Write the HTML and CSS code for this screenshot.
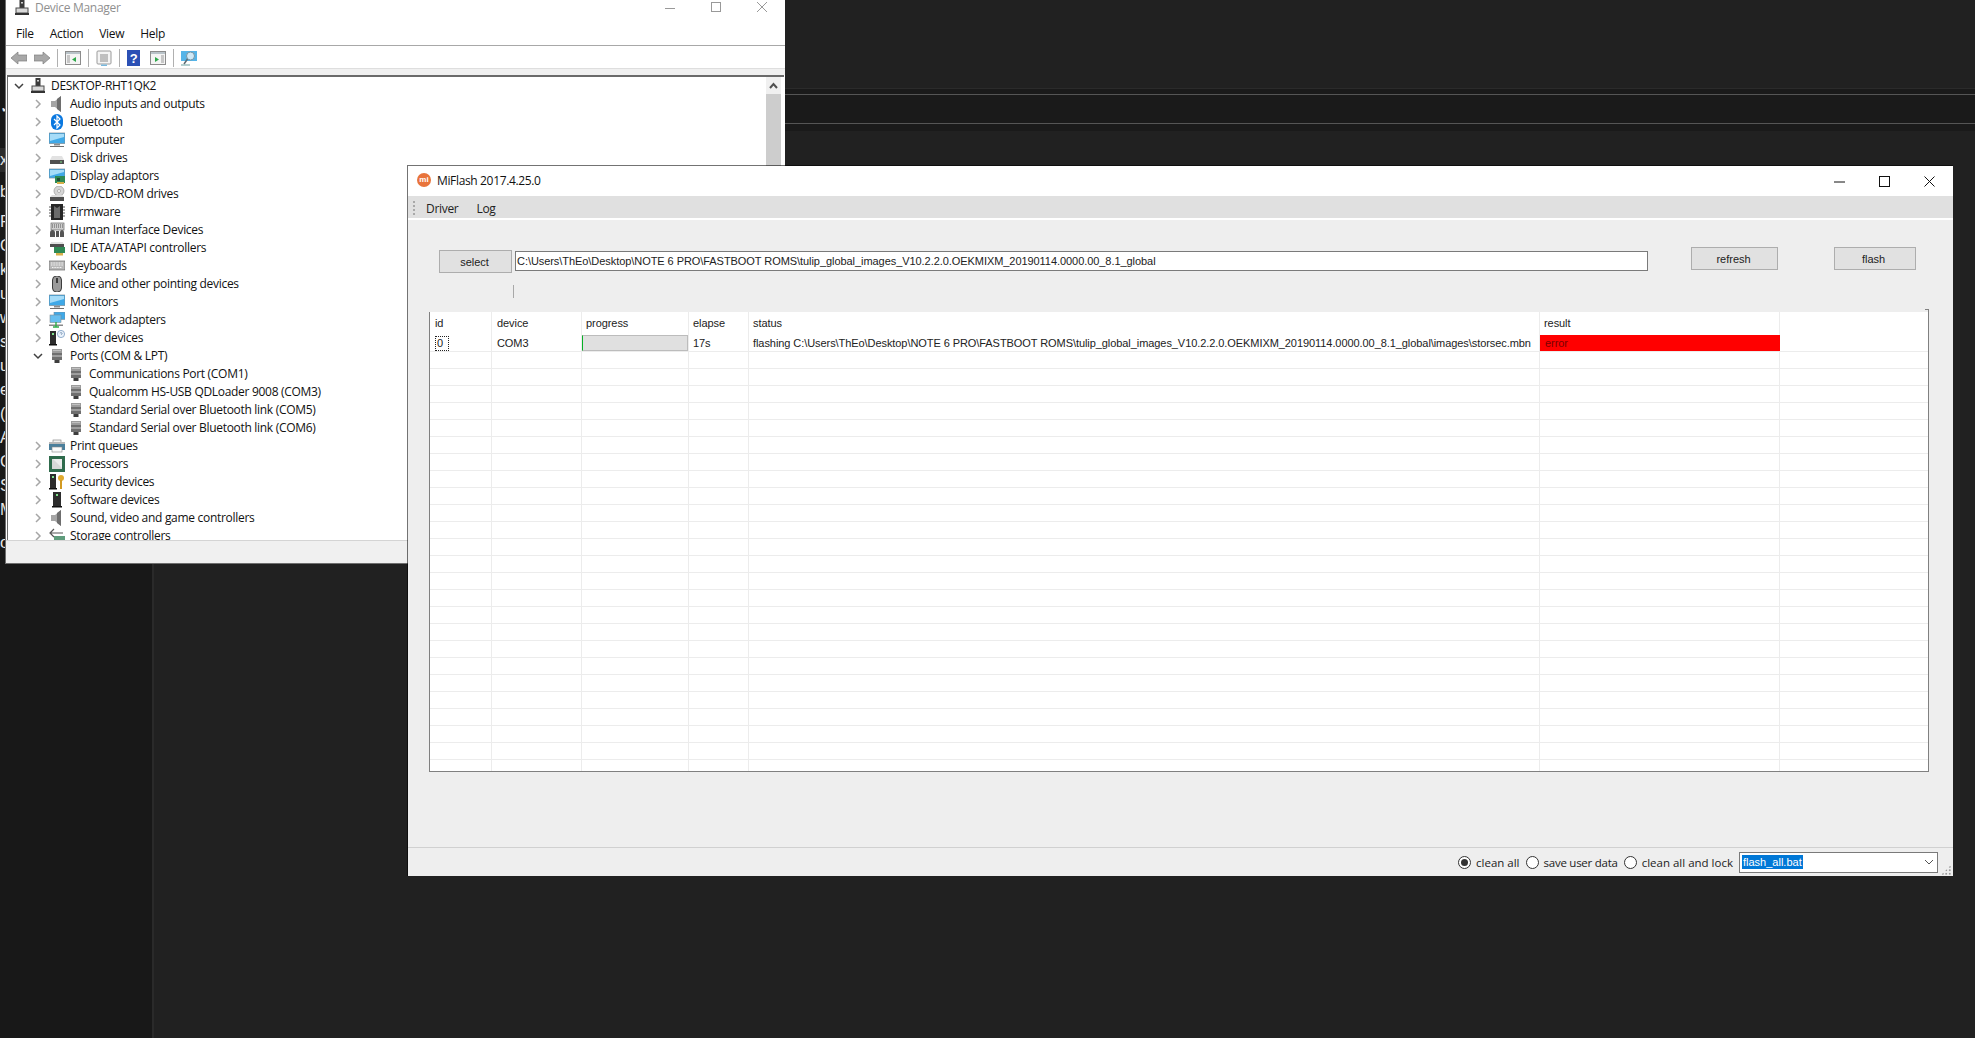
FILE: index.html
```html
<!DOCTYPE html>
<html lang="en">
<head>
<meta charset="utf-8">
<title>Device Manager and MiFlash</title>
<link rel="stylesheet" href="styles.css">
</head>
<body>
<svg class="defs" width="0" height="0" aria-hidden="true">
  <symbol id="i-pc" viewBox="0 0 16 16"><rect x="5.5" y="0" width="5" height="9" fill="#3a3a3a"/><rect x="7" y="2" width="2" height="1.5" fill="#cfcfcf"/><rect x="2" y="8" width="12" height="5" fill="#d9d9d9" stroke="#4a4a4a"/><rect x="1" y="13" width="14" height="2" fill="#333"/></symbol>
  <symbol id="i-audio" viewBox="0 0 16 16"><path d="M2 5h4l6-5v16l-6-5H2z" fill="#a5a5a5"/><path d="M8 3l4-3v16l-4-3z" fill="#6e6e6e"/></symbol>
  <symbol id="i-bt" viewBox="0 0 16 16"><rect x="2" y="0" width="12" height="16" rx="6" fill="#0a78e0"/><path d="M5 5l6 6-3 3V2l3 3-6 6" fill="none" stroke="#fff" stroke-width="1.2"/></symbol>
  <symbol id="i-monitor" viewBox="0 0 16 16"><rect x="0" y="1" width="16" height="10.5" fill="#3fa9e8" stroke="#7d8c96" stroke-width=".7"/><path d="M1 2h14v3L1 9z" fill="#a6dcf8"/><rect x="5" y="12" width="6" height="1.5" fill="#8d8d8d"/><rect x="1" y="14" width="14" height="1" fill="#6d6d6d"/></symbol>
  <symbol id="i-disk" viewBox="0 0 16 16"><path d="M3 6h10l2 4H1z" fill="#e2e2e2"/><rect x="1" y="10" width="14" height="4" fill="#4f4f4f"/><rect x="11" y="11.5" width="2" height="1" fill="#7fe08a"/></symbol>
  <symbol id="i-display" viewBox="0 0 16 16"><rect x="0" y="1" width="16" height="9" fill="#3fa9e8" stroke="#7d8c96" stroke-width=".7"/><path d="M1 2h14v2L1 8z" fill="#a6dcf8"/><rect x="6" y="8" width="10" height="7" fill="#2f8a55"/><rect x="8" y="14" width="7" height="2" fill="#d8b04a"/><rect x="8" y="10" width="3" height="3" fill="#1f4a33"/></symbol>
  <symbol id="i-dvd" viewBox="0 0 16 16"><circle cx="10" cy="5" r="5" fill="#d5d5d5" stroke="#9a9a9a" stroke-width=".7"/><circle cx="10" cy="5" r="1.5" fill="#fff" stroke="#8a8a8a" stroke-width=".6"/><path d="M3 9h10l2 2H1z" fill="#dcdcdc"/><rect x="1" y="11" width="14" height="4" fill="#4f4f4f"/></symbol>
  <symbol id="i-chip" viewBox="0 0 16 16"><rect x="2" y="0" width="12" height="16" fill="#262626"/><path d="M5 2l3 2 3-2v12H5z" fill="#6a6a6a"/><path d="M2 3H0M2 6H0M2 9H0M2 12H0M16 3h-2M16 6h-2M16 9h-2M16 12h-2" stroke="#555"/></symbol>
  <symbol id="i-hid" viewBox="0 0 16 16"><rect x="2" y="1" width="13" height="7" fill="#cfcfcf" stroke="#6a6a6a" stroke-width=".7"/><path d="M3 3h11M3 5h11" stroke="#555" stroke-dasharray="1 1"/><path d="M1 15V11q0-3 2.5-3T6 11v4zM7 15V9h3v6zM11 15v-4q0-3 2-3t2 3v4z" fill="#555"/></symbol>
  <symbol id="i-ide" viewBox="0 0 16 16"><path d="M2 2h12l1 3H1z" fill="#e2e2e2"/><rect x="1" y="4" width="14" height="3" fill="#4f4f4f"/><rect x="5" y="7" width="11" height="6" fill="#2f8a55"/><rect x="7" y="13" width="7" height="2.5" fill="#d8b04a"/></symbol>
  <symbol id="i-kbd" viewBox="0 0 16 16"><rect x="0" y="3" width="16" height="9" fill="#b8b8b8" stroke="#6a6a6a" stroke-width=".7"/><path d="M2 5h12M2 7h12M3 9.500h10" stroke="#f4f4f4" stroke-dasharray="1 .6"/></symbol>
  <symbol id="i-mouse" viewBox="0 0 16 16"><rect x="3.500" y="0" width="9" height="16" rx="4" fill="#9a9a9a" stroke="#3c3c3c"/><rect x="7" y="2" width="2" height="5" fill="#3c3c3c"/></symbol>
  <symbol id="i-net" viewBox="0 0 16 16"><rect x="5" y="0" width="11" height="7.500" fill="#3fa9e8" stroke="#7d8c96" stroke-width=".6"/><rect x="1" y="3" width="11" height="7.500" fill="#67bff0" stroke="#7d8c96" stroke-width=".6"/><rect x="0" y="12.500" width="14" height="1.500" fill="#8a8a8a"/><path d="M7 10v5M4 15h6" stroke="#2eae4a" stroke-width="1.400"/></symbol>
  <symbol id="i-other" viewBox="0 0 16 16"><rect x="1" y="1" width="6" height="13" fill="#2c2c2c"/><rect x="3" y="3" width="2" height="2" fill="#7ee08a"/><rect x="0" y="14" width="8" height="1.500" fill="#111"/><circle cx="12" cy="4" r="3.600" fill="#eaf2fb" stroke="#7b9cc0" stroke-width=".8"/><path d="M10.800 3.200q1.200-1.400 2.400 0 0 .8-1.200 1.600" fill="none" stroke="#5f7fa3" stroke-width=".7"/></symbol>
  <symbol id="i-port" viewBox="0 0 16 16"><rect x="3" y="1" width="10" height="5" fill="#9c9c9c"/><path d="M4.500 2.500h7" stroke="#e5e5e5" stroke-dasharray="1 1"/><rect x="3" y="5" width="10" height="7" fill="#6f6f6f"/><path d="M3 8h10" stroke="#cfcfcf"/><rect x="5.500" y="12" width="5" height="3" fill="#3d3d3d"/></symbol>
  <symbol id="i-print" viewBox="0 0 16 16"><rect x="4" y="2" width="8" height="4" fill="#f2f2f2" stroke="#777" stroke-width=".6"/><path d="M0 5h16v7h-3V9H3v3H0z" fill="#4a7f9c"/><rect x="0" y="4" width="16" height="2" fill="#b9b9b9"/><rect x="3" y="9" width="10" height="5" fill="#fbfbfb" stroke="#888" stroke-width=".6"/></symbol>
  <symbol id="i-cpu" viewBox="0 0 16 16"><rect x="0" y="0" width="16" height="16" fill="#2f6b4c"/><rect x="3" y="3" width="10" height="10" fill="#d8d8d8"/><path d="M4 3l9 0 0 9z" fill="#ececec"/></symbol>
  <symbol id="i-sec" viewBox="0 0 16 16"><rect x="1" y="0" width="6" height="14" fill="#2c2c2c"/><rect x="3" y="2" width="2" height="2" fill="#7ee08a"/><rect x="0" y="14" width="8" height="1.500" fill="#111"/><circle cx="12" cy="4" r="3" fill="#e0aa2e"/><rect x="11" y="6" width="2" height="9" fill="#d29a22"/></symbol>
  <symbol id="i-soft" viewBox="0 0 16 16"><rect x="4" y="0" width="8" height="14" fill="#2c2c2c"/><rect x="7" y="2" width="2" height="2" fill="#7ee08a"/><rect x="3" y="14" width="10" height="1.500" fill="#111"/></symbol>
  <symbol id="i-store" viewBox="0 0 16 16"><path d="M5 1L1 5l4 4M2 5h12" fill="none" stroke="#555" stroke-width="1.200"/><rect x="5" y="8" width="11" height="5" fill="#5f9c7c"/></symbol>
  <symbol id="c-r" viewBox="0 0 10 10"><path d="M3 1l4 4-4 4" fill="none" stroke="#a6a6a6" stroke-width="1.500"/></symbol>
  <symbol id="c-d" viewBox="0 0 10 10"><path d="M1 3l4 4 4-4" fill="none" stroke="#404040" stroke-width="1.500"/></symbol>
</svg>

<div class="desktop">
  <aside class="side">
    <div class="strip">
      <span class="ln">✓</span>
      <span class="ln hl m28">x</span>
      <span class="ln m8">b</span>
      <span class="ln m6">P(</span>
      <span class="ln">O</span>
      <span class="ln">k</span>
      <span class="ln">u</span>
      <span class="ln">w</span>
      <span class="ln">si</span>
      <span class="ln">u</span>
      <span class="ln">e</span>
      <span class="ln">(C</span>
      <span class="ln">A</span>
      <span class="ln">C</span>
      <span class="ln">S</span>
      <span class="ln">M</span>
      <span class="ln m9">o</span>
    </div>
  </aside>
  <main class="editor">
    <div class="band"><div class="band-in"></div></div>
  </main>

  <section class="win dm">
    <header class="dm-title">
      <svg class="ic ttl-ic"><use href="#i-pc"/></svg>
      <span class="dm-name">Device Manager</span>
      <span class="dm-ctl">
        <svg width="10" height="10" viewBox="0 0 10 10"><path d="M0 6.500h10" stroke="#999"/></svg>
        <svg width="10" height="10" viewBox="0 0 10 10"><rect x=".5" y=".5" width="9" height="9" fill="none" stroke="#999"/></svg>
        <svg width="10" height="10" viewBox="0 0 10 10"><path d="M0 0l10 10M10 0L0 10" stroke="#999"/></svg>
      </span>
    </header>
    <nav class="dm-menu"><span>File</span><span>Action</span><span>View</span><span>Help</span></nav>
    <div class="dm-tools">
      <svg class="t t-first" viewBox="0 0 16 16"><path d="M0 8l7-6v3h9v6H7v3z" fill="#a8a8a8" stroke="#7e7e7e" stroke-width=".7"/></svg>
      <svg class="t t-near" viewBox="0 0 16 16"><path d="M16 8L9 2v3H0v6h9v3z" fill="#a8a8a8" stroke="#7e7e7e" stroke-width=".7"/></svg>
      <i class="tsep"></i>
      <svg class="t" viewBox="0 0 16 16"><rect x=".5" y="1.500" width="15" height="13" fill="#f4f4f4" stroke="#8c8c8c"/><rect x="1" y="2" width="14" height="2" fill="#b9c3c9"/><path d="M11 7v5L7 9.500z" fill="#2ea84a"/><path d="M2 6h3M2 8h3M2 10h3M2 12h3" stroke="#9a9a9a"/></svg>
      <i class="tsep"></i>
      <svg class="t" viewBox="0 0 16 16"><rect x="1" y="1" width="14" height="13" rx="1" fill="#f4f4f4" stroke="#9a9a9a"/><path d="M4 5h8M4 7h8M4 9h8M4 11h8" stroke="#8a8a8a"/><rect x="5" y="14.500" width="6" height="1.500" fill="#78b8dd"/></svg>
      <i class="tsep"></i>
      <svg class="t t-help" viewBox="0 0 13 16"><rect width="13" height="16" fill="#2b50b5"/><text x="6.500" y="13" class="qm">?</text></svg>
      <svg class="t t-near2" viewBox="0 0 16 16"><rect x=".5" y="1.500" width="15" height="13" fill="#f4f4f4" stroke="#8c8c8c"/><rect x="1" y="2" width="14" height="2" fill="#b9c3c9"/><path d="M5 7v5l4-2.500z" fill="#2ea84a"/><path d="M11 6h3M11 8h3M11 10h3M11 12h3" stroke="#9a9a9a"/></svg>
      <i class="tsep"></i>
      <svg class="t" viewBox="0 0 16 16"><rect x="0" y="1" width="16" height="10" fill="#55b4e8"/><circle cx="9.500" cy="6" r="4" fill="#cfe9f7" stroke="#7a94a3"/><path d="M6.500 9L3 14" stroke="#5d6b73" stroke-width="1.500"/><path d="M0 15h9" stroke="#6b9f9f"/></svg>
    </div>
    <div class="dm-strip"></div>
    <div class="dm-tree">
      <ul class="tree">
        <li class="root"><svg class="chev"><use href="#c-d"/></svg><svg class="ic"><use href="#i-pc"/></svg><span>DESKTOP-RHT1QK2</span></li>
        <li><svg class="chev"><use href="#c-r"/></svg><svg class="ic"><use href="#i-audio"/></svg><span>Audio inputs and outputs</span></li>
        <li><svg class="chev"><use href="#c-r"/></svg><svg class="ic"><use href="#i-bt"/></svg><span>Bluetooth</span></li>
        <li><svg class="chev"><use href="#c-r"/></svg><svg class="ic"><use href="#i-monitor"/></svg><span>Computer</span></li>
        <li><svg class="chev"><use href="#c-r"/></svg><svg class="ic"><use href="#i-disk"/></svg><span>Disk drives</span></li>
        <li><svg class="chev"><use href="#c-r"/></svg><svg class="ic"><use href="#i-display"/></svg><span>Display adaptors</span></li>
        <li><svg class="chev"><use href="#c-r"/></svg><svg class="ic"><use href="#i-dvd"/></svg><span>DVD/CD-ROM drives</span></li>
        <li><svg class="chev"><use href="#c-r"/></svg><svg class="ic"><use href="#i-chip"/></svg><span>Firmware</span></li>
        <li><svg class="chev"><use href="#c-r"/></svg><svg class="ic"><use href="#i-hid"/></svg><span>Human Interface Devices</span></li>
        <li><svg class="chev"><use href="#c-r"/></svg><svg class="ic"><use href="#i-ide"/></svg><span>IDE ATA/ATAPI controllers</span></li>
        <li><svg class="chev"><use href="#c-r"/></svg><svg class="ic"><use href="#i-kbd"/></svg><span>Keyboards</span></li>
        <li><svg class="chev"><use href="#c-r"/></svg><svg class="ic"><use href="#i-mouse"/></svg><span>Mice and other pointing devices</span></li>
        <li><svg class="chev"><use href="#c-r"/></svg><svg class="ic"><use href="#i-monitor"/></svg><span>Monitors</span></li>
        <li><svg class="chev"><use href="#c-r"/></svg><svg class="ic"><use href="#i-net"/></svg><span>Network adapters</span></li>
        <li><svg class="chev"><use href="#c-r"/></svg><svg class="ic"><use href="#i-other"/></svg><span>Other devices</span></li>
        <li><svg class="chev"><use href="#c-d"/></svg><svg class="ic"><use href="#i-port"/></svg><span>Ports (COM &amp; LPT)</span></li>
        <li class="kid"><svg class="ic"><use href="#i-port"/></svg><span>Communications Port (COM1)</span></li>
        <li class="kid"><svg class="ic"><use href="#i-port"/></svg><span>Qualcomm HS-USB QDLoader 9008 (COM3)</span></li>
        <li class="kid"><svg class="ic"><use href="#i-port"/></svg><span>Standard Serial over Bluetooth link (COM5)</span></li>
        <li class="kid"><svg class="ic"><use href="#i-port"/></svg><span>Standard Serial over Bluetooth link (COM6)</span></li>
        <li><svg class="chev"><use href="#c-r"/></svg><svg class="ic"><use href="#i-print"/></svg><span>Print queues</span></li>
        <li><svg class="chev"><use href="#c-r"/></svg><svg class="ic"><use href="#i-cpu"/></svg><span>Processors</span></li>
        <li><svg class="chev"><use href="#c-r"/></svg><svg class="ic"><use href="#i-sec"/></svg><span>Security devices</span></li>
        <li><svg class="chev"><use href="#c-r"/></svg><svg class="ic"><use href="#i-soft"/></svg><span>Software devices</span></li>
        <li><svg class="chev"><use href="#c-r"/></svg><svg class="ic"><use href="#i-audio"/></svg><span>Sound, video and game controllers</span></li>
        <li><svg class="chev"><use href="#c-r"/></svg><svg class="ic"><use href="#i-store"/></svg><span>Storage controllers</span></li>
      </ul>
      <div class="vscroll">
        <div class="vbtn"><svg width="9" height="7" viewBox="0 0 9 7"><path d="M1 6l3.500-4L8 6" fill="none" stroke="#505050" stroke-width="2"/></svg></div>
        <div class="vthumb"></div>
      </div>
    </div>
    <footer class="dm-status"></footer>
  </section>

  <section class="win mf">
    <header class="mf-title">
      <span class="mi-logo">mi</span>
      <span class="mf-name">MiFlash 2017.4.25.0</span>
      <span class="mf-ctl">
        <svg width="11" height="11" viewBox="0 0 11 11"><path d="M0 6h11" stroke="#111"/></svg>
        <svg width="11" height="11" viewBox="0 0 11 11"><rect x=".5" y=".5" width="10" height="10" fill="none" stroke="#111"/></svg>
        <svg width="11" height="11" viewBox="0 0 11 11"><path d="M.5.500l10 10M10.500.500l-10 10" stroke="#111"/></svg>
      </span>
    </header>
    <nav class="mf-menu"><i class="grip"></i><span>Driver</span><span>Log</span></nav>
    <div class="mf-body">
      <div class="path-row">
        <button class="btn btn-select">select</button>
        <div class="path">C:\Users\ThEo\Desktop\NOTE 6 PRO\FASTBOOT ROMS\tulip_global_images_V10.2.2.0.OEKMIXM_20190114.0000.00_8.1_global</div>
        <button class="btn btn-refresh">refresh</button>
        <button class="btn btn-flash">flash</button>
      </div>
      <div class="tick"></div>
      <div class="grid">
        <div class="grid-clip">
        <table>
          <colgroup><col class="c1"><col class="c2"><col class="c3"><col class="c4"><col class="c5"><col class="c6"><col class="c7"></colgroup>
          <thead><tr><th>id</th><th>device</th><th>progress</th><th>elapse</th><th>status</th><th>result</th><th class="nb"></th></tr></thead>
          <tbody>
            <tr><td><span class="focus">0</span></td><td>COM3</td><td class="prog"><div class="bar"></div></td><td>17s</td><td>flashing C:\Users\ThEo\Desktop\NOTE 6 PRO\FASTBOOT ROMS\tulip_global_images_V10.2.2.0.OEKMIXM_20190114.0000.00_8.1_global\images\storsec.mbn</td><td class="err">error</td><td class="nb"></td></tr>
            <tr><td></td><td></td><td></td><td></td><td></td><td></td><td class="nb"></td></tr>
            <tr><td></td><td></td><td></td><td></td><td></td><td></td><td class="nb"></td></tr>
            <tr><td></td><td></td><td></td><td></td><td></td><td></td><td class="nb"></td></tr>
            <tr><td></td><td></td><td></td><td></td><td></td><td></td><td class="nb"></td></tr>
            <tr><td></td><td></td><td></td><td></td><td></td><td></td><td class="nb"></td></tr>
            <tr><td></td><td></td><td></td><td></td><td></td><td></td><td class="nb"></td></tr>
            <tr><td></td><td></td><td></td><td></td><td></td><td></td><td class="nb"></td></tr>
            <tr><td></td><td></td><td></td><td></td><td></td><td></td><td class="nb"></td></tr>
            <tr><td></td><td></td><td></td><td></td><td></td><td></td><td class="nb"></td></tr>
            <tr><td></td><td></td><td></td><td></td><td></td><td></td><td class="nb"></td></tr>
            <tr><td></td><td></td><td></td><td></td><td></td><td></td><td class="nb"></td></tr>
            <tr><td></td><td></td><td></td><td></td><td></td><td></td><td class="nb"></td></tr>
            <tr><td></td><td></td><td></td><td></td><td></td><td></td><td class="nb"></td></tr>
            <tr><td></td><td></td><td></td><td></td><td></td><td></td><td class="nb"></td></tr>
            <tr><td></td><td></td><td></td><td></td><td></td><td></td><td class="nb"></td></tr>
            <tr><td></td><td></td><td></td><td></td><td></td><td></td><td class="nb"></td></tr>
            <tr><td></td><td></td><td></td><td></td><td></td><td></td><td class="nb"></td></tr>
            <tr><td></td><td></td><td></td><td></td><td></td><td></td><td class="nb"></td></tr>
            <tr><td></td><td></td><td></td><td></td><td></td><td></td><td class="nb"></td></tr>
            <tr><td></td><td></td><td></td><td></td><td></td><td></td><td class="nb"></td></tr>
            <tr><td></td><td></td><td></td><td></td><td></td><td></td><td class="nb"></td></tr>
            <tr><td></td><td></td><td></td><td></td><td></td><td></td><td class="nb"></td></tr>
            <tr><td></td><td></td><td></td><td></td><td></td><td></td><td class="nb"></td></tr>
            <tr><td></td><td></td><td></td><td></td><td></td><td></td><td class="nb"></td></tr>
            <tr><td></td><td></td><td></td><td></td><td></td><td></td><td class="nb"></td></tr>
          </tbody>
        </table>
        </div>
      </div>
      <footer class="mf-status">
        <label class="radio"><i class="dot on"></i><span>clean all</span></label>
        <label class="radio"><i class="dot"></i><span class="tight">save user data</span></label>
        <label class="radio"><i class="dot"></i><span>clean all and lock</span></label>
        <div class="combo"><span class="sel">flash_all.bat</span><svg width="10" height="6" viewBox="0 0 10 6"><path d="M1 1l4 4 4-4" fill="none" stroke="#555"/></svg></div>
        <i class="sizegrip"></i>
      </footer>
    </div>
  </section>
</div>
</body>
</html>
```
FILE: styles.css
```css
* { box-sizing: border-box; }
html, body { margin: 0; padding: 0; height: 100%; background: #212121; overflow: hidden; }
.defs { position: absolute; }

.desktop {
  position: relative;
  width: 1975px;
  height: 1038px;
  overflow: hidden;
  display: flex;
  background: #212121;
}

/* Background application */
.side {
  width: 154px;
  flex: none;
  background: #181818;
  border-right: 2px solid #2a2a2a;
  padding-top: 96px;
}
.strip {
  width: 6px;
  display: flex;
  flex-direction: column;
  overflow: hidden;
  font: 16px/24px "Liberation Sans", sans-serif;
  color: #e6e6e6;
}
.ln { height: 24px; white-space: nowrap; flex: none; }
.hl { background: #2c2c2c; }
.m28 { margin-top: 28px; }
.m8 { margin-top: 8px; }
.m6 { margin-top: 6px; }
.m9 { margin-top: 9px; }

.editor { flex: 1; padding-top: 88px; }
.band {
  height: 43px;
  background: #1a1a1a;
  border-top: 1px solid #2b2b2b;
  padding-top: 5px;
}
.band-in {
  height: 30px;
  border-top: 1px solid #555;
  border-bottom: 1px solid #555;
}

/* Windows on the desktop */
.win { position: absolute; display: flex; flex-direction: column; }

/* Device Manager */
.dm {
  left: 5px;
  top: 0;
  width: 780px;
  height: 564px;
  background: #fff;
  border-left: 1px solid #6e6e6e;
  border-bottom: 1px solid #6e6e6e;
  font-family: "Open Sans", "Noto Sans", sans-serif;
  color: #111;
  letter-spacing: -.3px;
}
.dm-title { height: 22px; flex: none; display: flex; align-items: flex-start; padding-left: 8px; position: relative; }
.ttl-ic { width: 14px; height: 16px; margin-right: 8px; }
.dm-name { font-size: 12px; line-height: 16px; color: #8f8f8f; }
.dm-ctl { margin-left: auto; display: flex; gap: 36px; padding: 2px 18px 0 0; }
.dm-menu {
  height: 24px;
  flex: none;
  display: flex;
  gap: 16px;
  padding-left: 10px;
  font-size: 12px;
  line-height: 23px;
  border-bottom: 1px solid #a8a8a8;
}
.dm-tools { height: 22px; flex: none; display: flex; align-items: center; padding: 2px 0 0 5px; background: #fff; }
.t { width: 16px; height: 16px; flex: none; }
.t-near { margin-left: 7px; }
.t-help { width: 13px; }
.t-near2 { margin-left: 10px; }
.tsep { width: 1px; height: 18px; background: #b0b0b0; margin: 0 7px; flex: none; }
.qm { font: bold 13px "Liberation Sans", sans-serif; fill: #fff; text-anchor: middle; }
.dm-strip { height: 7px; flex: none; background: #f0f0f0; border-top: 1px solid #dedede; }
.dm-tree {
  height: 465px;
  flex: none;
  margin: 0 1px 0 1px;
  display: flex;
  border-top: 2px solid #6a6a6a;
  border-left: 1px solid #6a6a6a;
  overflow: hidden;
  background: #fff;
}
.tree { list-style: none; margin: 0; padding: 0; flex: 1; font-size: 12px; }
.tree li { height: 18px; display: flex; align-items: center; white-space: nowrap; padding-left: 25px; }
.tree li.root { padding-left: 6px; }
.tree li.kid { padding-left: 60px; }
.tree li span { margin-top: -1px; }
.chev { width: 10px; height: 10px; flex: none; margin-right: 6px; }
.root .chev { margin-right: 6px; }
.ic { width: 16px; height: 16px; flex: none; margin-right: 5px; }
.vscroll { width: 15px; flex: none; margin-right: 3px; display: flex; flex-direction: column; }
.vbtn { height: 17px; background: #f0f0f0; display: flex; align-items: center; justify-content: center; }
.vthumb { flex: 1; background: #cdcdcd; }
.dm-status { flex: 1; background: #f0f0f0; border-top: 1px solid #d4d4d4; }

/* MiFlash */
.mf {
  left: 407px;
  top: 165px;
  width: 1546px;
  height: 711px;
  background: #fff;
  background-clip: padding-box;
  border-left: 1px solid rgba(0,0,0,.55);
  border-top: 1px solid rgba(0,0,0,.55);
  font-family: "Liberation Sans", sans-serif;
  color: #222;
}
.mf-title { height: 30px; flex: none; display: flex; align-items: center; padding: 0 0 2px 9px; font-family: "Open Sans", "Noto Sans", sans-serif; }
.mi-logo {
  width: 14px; height: 14px; border-radius: 50%;
  background: #e8743b; color: #fff;
  font: bold 8px/14px "Liberation Sans", sans-serif;
  text-align: center;
  margin-right: 6px;
}
.mf-name { font-size: 12px; color: #111; letter-spacing: -.35px; }
.mf-ctl { margin-left: auto; display: flex; gap: 34px; padding: 2px 18px 0 0; }
.mf-menu {
  height: 24px;
  flex: none;
  display: flex;
  gap: 18px;
  padding: 2px 0 0 5px;
  background: #e0e0e0;
  border-bottom: 2px solid #fff;
  font: 12px/19px "Open Sans", "Noto Sans", sans-serif;
  letter-spacing: -.3px;
  align-items: center;
  color: #222;
}
.grip { width: 2px; height: 14px; border-left: 2px dotted #a8a8a8; margin-right: -7px; }
.mf-body { flex: 1; background: #eee; display: flex; flex-direction: column; padding-top: 27px; font-size: 11px; min-height: 0; }
.path-row { display: flex; align-items: flex-start; padding-left: 31px; }
.btn {
  height: 23px;
  padding: 0 2px 0 0;
  background: #e1e1e1;
  border: 1px solid #adadad;
  font: 11px "Liberation Sans", sans-serif;
  color: #222;
}
.btn-select { width: 73px; margin-top: 3px; }
.path {
  width: 1133px;
  height: 20px;
  margin: 4px 43px 0 3px;
  background: #fff;
  border: 1px solid #7a7a7a;
  padding-left: 1px;
  line-height: 18px;
  letter-spacing: -.06px;
  white-space: nowrap;
}
.btn-refresh { width: 87px; }
.btn-flash { width: 82px; margin-left: 56px; padding-right: 3px; }
.tick { width: 1px; height: 13px; background: #a8a8a8; margin: 12px 0 0 105px; flex: none; }
.grid {
  position: relative;
  width: 1500px;
  height: 460px;
  flex: none;
  margin: 14px 0 0 21px;
  background: #fff;
  border-left: 1px solid #808080;
  border-right: 1px solid #808080;
  border-bottom: 1px solid #808080;
}
.grid::after { content: ""; position: absolute; right: -1px; top: -3px; width: 3px; height: 3px; border-top: 1px solid #808080; border-right: 1px solid #808080; }
.grid-clip { height: 459px; overflow: hidden; }
.grid table { width: 1498px; table-layout: fixed; border-collapse: separate; border-spacing: 0; }
.c1 { width: 62px; } .c2 { width: 90px; } .c3 { width: 107px; } .c4 { width: 60px; } .c5 { width: 791px; } .c6 { width: 240px; } .c7 { width: 148px; }
th, td { padding: 0 0 0 5px; font-weight: normal; text-align: left; white-space: nowrap; overflow: hidden; border-right: 1px solid #ececec; font-size: 11px; letter-spacing: -.07px; }
th:nth-child(n+3), td:nth-child(n+3) { padding-left: 4px; }
th { height: 23px; padding-bottom: 2px; }
td { height: 17px; line-height: 14px; border-bottom: 1px solid #ececec; }
.nb { border-right: 0; }
.focus { display: inline-block; width: 14px; height: 15px; border: 1px dotted #222; padding-left: 1px; line-height: 13px; vertical-align: top; }
td.prog { padding: 0; }
.bar { height: 16px; background: #e0e0e0; border: 1px solid #bcbcbc; border-left: 1px solid #06b025; }
td.err { background: #f00; color: #7a0000; padding-left: 5px; border-right: 0; }

.mf-status {
  margin-top: auto;
  height: 29px;
  flex: none;
  display: flex;
  align-items: center;
  justify-content: flex-end;
  border-top: 1px solid #d0d0d0;
  padding-right: 2px;
  position: relative;
  font-family: "Open Sans", "Noto Sans", sans-serif;
  font-size: 11.500px;
}
.radio { display: flex; align-items: center; gap: 5px; margin-right: 6px; }
.tight { letter-spacing: -.25px; }
.dot { width: 13px; height: 13px; border-radius: 50%; border: 1px solid #333; background: #fff; flex: none; position: relative; }
.dot.on::after { content: ""; position: absolute; inset: 2px; border-radius: 50%; background: #333; }
.combo {
  width: 199px;
  height: 21px;
  margin-right: 13px;
  background: #fff;
  border: 1px solid #7a7a7a;
  display: flex;
  align-items: center;
  justify-content: space-between;
  padding: 0 3px 0 2px;
  font: 11px "Liberation Sans", sans-serif;
}
.sel { background: #0078d7; color: #fff; padding: 0 1px; line-height: 14px; }
.sizegrip {
  position: absolute;
  right: 2px;
  bottom: 1px;
  width: 10px;
  height: 10px;
  background: radial-gradient(circle, #9a9a9a 1px, transparent 1.200px) 0 0 / 3.500px 3.500px;
  clip-path: polygon(100% 0, 100% 100%, 0 100%);
}
```
